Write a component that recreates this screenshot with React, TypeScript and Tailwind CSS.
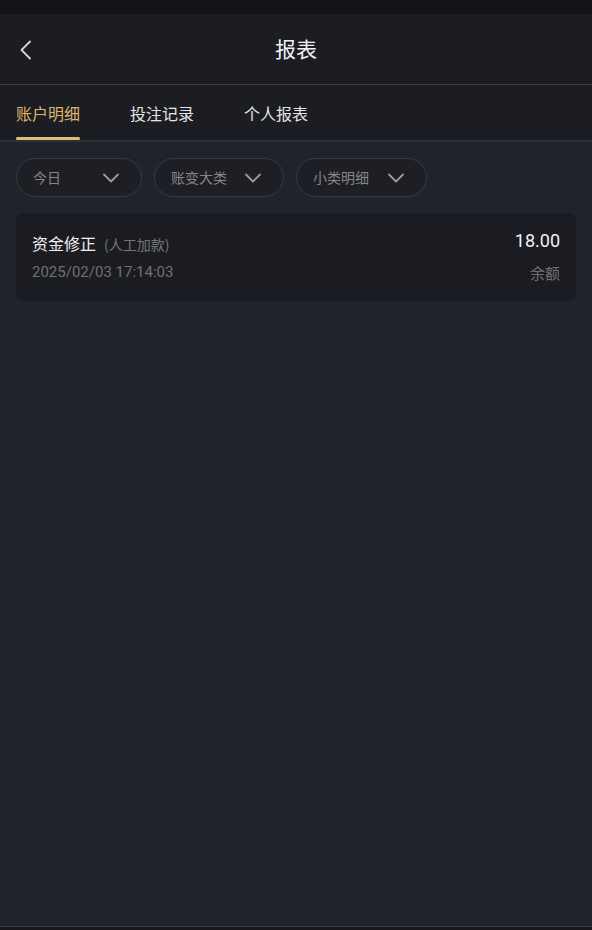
const font = { fontFamily: '"Noto Sans CJK SC", "Noto Sans", sans-serif' };

const Chevron = () => (
  <svg width="20" height="20" viewBox="0 0 20 20" fill="none">
    <path d="M3 6.5 L10 13.5 L17 6.5" stroke="#9a9ba1" strokeWidth="1.8" strokeLinecap="round" strokeLinejoin="round" />
  </svg>
);

const Pill = ({ label, width }: { label: string; width: string }) => (
  <div className={`flex h-[39px] ${width} items-center justify-between rounded-full border border-[#383a42] bg-[#1e1f25] pl-4 pr-5`}>
    <span className="text-[14px] text-[#85868c]">{label}</span>
    <Chevron />
  </div>
);

export default function App() {
  return (
    <div className="flex h-[930px] w-[592px] flex-col bg-[#21232c]" style={font}>
      <div className="h-[14px] bg-[#131316]" />
      <div className="relative flex h-[71px] items-center justify-center border-b border-[#393a40] bg-[#1c1d22]">
        <svg className="absolute left-[18px] top-[26px]" width="16" height="20" viewBox="0 0 16 20" fill="none">
          <path d="M12 1.5 L3.5 10 L12 18.5" stroke="#d6d7db" strokeWidth="1.8" strokeLinecap="round" strokeLinejoin="round" />
        </svg>
        <span className="text-[21px] text-[#f1f1f3]">报表</span>
      </div>
      <div className="flex h-[57px] items-stretch gap-[50px] border-b-2 border-[#2e3037] bg-[#1c1d22] px-4">
        <div className="relative flex items-center">
          <span className="text-[16px] text-[#dcb56c]">账户明细</span>
          <div className="absolute bottom-0 left-0 right-0 h-[3px] rounded-full bg-[#dcbf73]" />
        </div>
        <div className="flex items-center">
          <span className="text-[16px] text-[#e4e4e7]">投注记录</span>
        </div>
        <div className="flex items-center">
          <span className="text-[16px] text-[#e4e4e7]">个人报表</span>
        </div>
      </div>
      <div className="flex gap-3 px-4 pt-4">
        <Pill label="今日" width="w-[126px]" />
        <Pill label="账变大类" width="w-[130px]" />
        <Pill label="小类明细" width="w-[131px]" />
      </div>
      <div className="mx-4 mt-4 flex h-[88px] items-center justify-between rounded-lg bg-[#1b1c21] px-4">
        <div className="flex flex-col gap-[6px] pt-[1px]">
          <div className="flex items-baseline gap-2">
            <span className="text-[16px] text-[#f0f0f2]">资金修正</span>
            <span className="text-[14px] text-[#75767c]">(人工加款)</span>
          </div>
          <span className="text-[15px] text-[#6f7076]" style={{ fontFamily: '"Roboto", "Noto Sans", sans-serif' }}>2025/02/03 17:14:03</span>
        </div>
        <div className="flex flex-col items-end gap-[8px] pb-[3px]">
          <span className="text-[18px] text-[#f0f0f2]" style={{ fontFamily: '"Roboto", "Noto Sans", sans-serif' }}>18.00</span>
          <span className="text-[15px] text-[#6f7076]">余额</span>
        </div>
      </div>
      <div className="flex-1" />
      <div className="h-[1px] bg-[#3a3b44]" />
      <div className="h-[3px] bg-[#17181c]" />
    </div>
  );
}
